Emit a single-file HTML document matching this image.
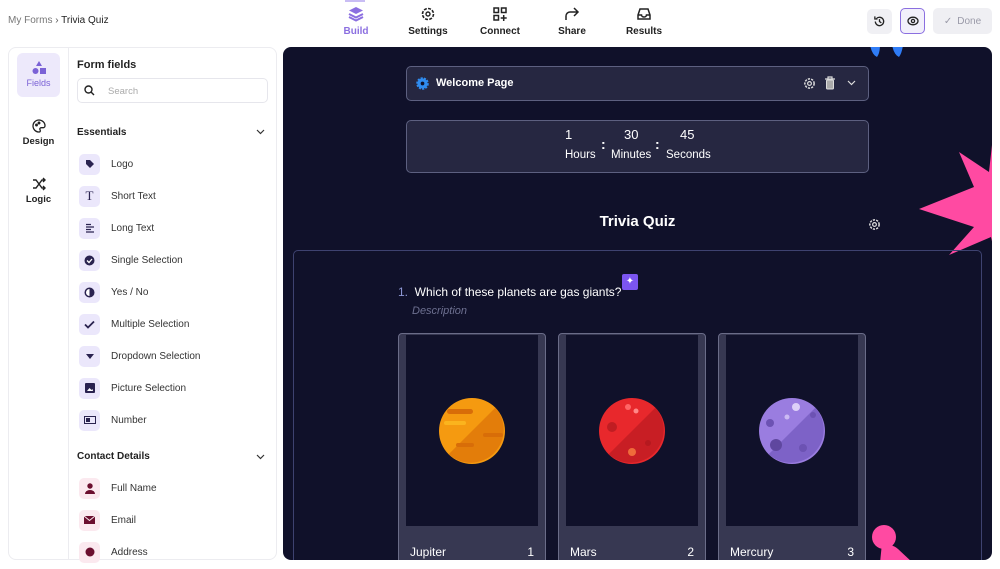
<!DOCTYPE html>
<html><head><meta charset="utf-8"><style>
*{box-sizing:border-box;margin:0;padding:0}
body{width:1000px;height:569px;overflow:hidden;background:#fff;font-family:"Liberation Sans",sans-serif;position:relative;color:#1f1f2e}
.abs{position:absolute}
.nav{position:absolute;top:6px;text-align:center;font-size:10px;font-weight:bold;color:#222}
.nav svg{display:block;margin:0 auto 4px}
.item{position:absolute;left:79px;height:22px;display:flex;align-items:center;font-size:10px;color:#333}
.ic{width:21px;height:21px;border-radius:5px;background:#ebe7fb;margin-right:11px;display:flex;align-items:center;justify-content:center}
.ic.p{background:#fbe9ef}
.sec{position:absolute;left:77px;font-size:10px;font-weight:bold;color:#222}
.chev{position:absolute;left:256px}
.card{position:absolute;top:286px;width:148px;height:240px;border:1px solid #6a6c88;border-radius:4px;background:#373852}
.card .img{position:absolute;left:7px;top:1px;width:132px;height:191px;background:#10112a}
.card .img svg{position:absolute;left:32px;top:62px;width:68px;height:68px;overflow:visible}
.card .l{position:absolute;left:11px;top:211px;color:#fff;font-size:12px}
.card .n{position:absolute;right:11px;top:211px;color:#fff;font-size:12px}
</style></head><body>
<div class="abs" style="left:8px;top:15px;font-size:10px;color:#777">My Forms <span style="color:#555">›</span> <span style="color:#222">Trivia Quiz</span></div>

<div class="nav" style="left:336px;width:40px;color:#8b6fe0">
<svg width="16" height="16" viewBox="0 0 16 16"><path d="M8 1 15 4.5 8 8 1 4.5Z" fill="#8b6fe0"/><path d="M1 8 8 11.5 15 8M1 11 8 14.5 15 11" fill="none" stroke="#8b6fe0" stroke-width="2"/></svg>Build</div>
<div class="abs" style="left:345px;top:0;width:20px;height:2px;background:#c9bdf4"></div>
<div class="nav" style="left:405px;width:46px"><svg width="16" height="16" viewBox="0 0 16 16"><circle cx="8" cy="8" r="5.5" fill="none" stroke="#222" stroke-width="1.6" stroke-dasharray="3 1.3"/><circle cx="8" cy="8" r="2" fill="none" stroke="#222" stroke-width="1.4"/></svg>Settings</div>
<div class="nav" style="left:478px;width:44px"><svg width="16" height="16" viewBox="0 0 16 16" fill="none" stroke="#222" stroke-width="1.5"><rect x="2" y="2" width="4.5" height="4.5"/><rect x="9.5" y="2" width="4.5" height="4.5"/><rect x="2" y="9.5" width="4.5" height="4.5"/><path d="M11.7 9v6M8.7 12h6"/></svg>Connect</div>
<div class="nav" style="left:552px;width:40px"><svg width="16" height="16" viewBox="0 0 16 16" fill="none" stroke="#222" stroke-width="1.5"><path d="M2 14V10a4 4 0 0 1 4-4h8M10 2l4 4-4 4"/></svg>Share</div>
<div class="nav" style="left:622px;width:44px"><svg width="16" height="16" viewBox="0 0 16 16" fill="none" stroke="#222" stroke-width="1.5"><path d="M2 9 4 3h8l2 6v4H2Z M2 9h3.5a2.5 2 0 0 0 5 0H14"/></svg>Results</div>

<div class="abs" style="left:867px;top:9px;width:25px;height:25px;border-radius:5px;background:#f0f0f4;display:flex;align-items:center;justify-content:center"><svg width="13" height="13" viewBox="0 0 14 14" fill="none" stroke="#222" stroke-width="1.4"><path d="M2.5 7a4.5 4.5 0 1 0 1.3-3.2M2 1.5v2.8h2.8M7 4.5V7l2 1.5"/></svg></div>
<div class="abs" style="left:900px;top:8px;width:25px;height:26px;border-radius:5px;background:#f2f0fb;border:1.5px solid #8b6fe0;display:flex;align-items:center;justify-content:center"><svg width="12" height="12" viewBox="0 0 12 12" fill="none" stroke="#222" stroke-width="1.3"><ellipse cx="6" cy="6" rx="5" ry="3.8"/><circle cx="6" cy="6" r="1.6"/></svg></div>
<div class="abs" style="left:933px;top:8px;width:59px;height:26px;border-radius:5px;background:#efeff3;font-size:10px;color:#9a9aa8;display:flex;align-items:center;justify-content:center;gap:5px"><span>✓</span>Done</div>

<!-- left panel -->
<div class="abs" style="left:8px;top:47px;width:269px;height:513px;border:1px solid #ececf0;border-radius:8px"></div>
<div class="abs" style="left:68px;top:48px;width:1px;height:512px;background:#ececf0"></div>
<div class="abs" style="left:17px;top:53px;width:43px;height:44px;border-radius:6px;background:#ede9fb;text-align:center;font-size:9px;color:#7b62d6;padding-top:8px"><svg width="14" height="14" viewBox="0 0 14 14" style="display:block;margin:0 auto 3px"><path d="M7 0 10 5H4Z" fill="#7b62d6"/><circle cx="3.5" cy="10" r="3" fill="#7b62d6"/><rect x="8" y="7" width="6" height="6" fill="#7b62d6"/></svg>Fields</div>
<div class="abs" style="left:17px;top:119px;width:43px;text-align:center;font-size:9.5px;font-weight:bold;color:#222"><svg width="14" height="14" viewBox="0 0 14 14" fill="none" stroke="#222" stroke-width="1.3" style="display:block;margin:0 auto 3px"><path d="M7 1a6 6 0 0 0 0 12c1.5 0 1.5-1.5 1-2.3-.6-1 .2-2 1.3-2H11a2 2 0 0 0 2-2C13 3.5 10 1 7 1Z"/><circle cx="4.5" cy="6" r=".8" fill="#222"/><circle cx="7" cy="4" r=".8" fill="#222"/></svg>Design</div>
<div class="abs" style="left:17px;top:177px;width:43px;text-align:center;font-size:9.5px;font-weight:bold;color:#222"><svg width="14" height="14" viewBox="0 0 14 14" fill="none" stroke="#222" stroke-width="1.4" style="display:block;margin:0 auto 3px"><path d="M1 3h3l6 8h3M1 11h3l6-8h3M11 1l2 2-2 2M11 9l2 2-2 2"/></svg>Logic</div>

<div class="abs" style="left:77px;top:59px;font-size:11px;font-weight:bold;color:#222">Form fields</div>
<div class="abs" style="left:77px;top:78px;width:191px;height:25px;border:1px solid #e6e6ec;border-radius:5px;font-size:9.5px;color:#aaa;padding:7px 0 0 30px">Search</div>
<svg class="abs" style="left:84px;top:85px" width="11" height="11" viewBox="0 0 11 11" fill="none" stroke="#222" stroke-width="1.4"><circle cx="4.5" cy="4.5" r="3.5"/><path d="M7 7l3 3"/></svg>

<div class="sec" style="top:127px">Essentials</div>
<svg class="chev" style="top:129px" width="9" height="6" viewBox="0 0 9 6" fill="none" stroke="#333" stroke-width="1.2"><path d="M1 1l3.5 3.5L8 1"/></svg>
<div class="item" style="top:153px"><div class="ic"><svg width="10" height="10" viewBox="0 0 10 10"><path d="M1 1h4l4 4-4 4-4-4Z" fill="#2a2350"/></svg></div>Logo</div>
<div class="item" style="top:185px"><div class="ic" style="font-family:'Liberation Serif',serif;font-size:13px;color:#2a2350">T</div>Short Text</div>
<div class="item" style="top:217px"><div class="ic"><svg width="10" height="10" viewBox="0 0 10 10" stroke="#2a2350" stroke-width="1.3"><path d="M1 1.5h5M1 4h8M1 6.5h5M1 9h8"/></svg></div>Long Text</div>
<div class="item" style="top:249px"><div class="ic"><svg width="11" height="11" viewBox="0 0 11 11"><circle cx="5.5" cy="5.5" r="5" fill="#2a2350"/><path d="M3 5.5l2 2 3-3.5" stroke="#fff" stroke-width="1.3" fill="none"/></svg></div>Single Selection</div>
<div class="item" style="top:281px"><div class="ic"><svg width="11" height="11" viewBox="0 0 11 11"><circle cx="5.5" cy="5.5" r="5" fill="#2a2350"/><path d="M5.5 5.5V2a3.5 3.5 0 0 0 0 7Z" fill="#fff"/></svg></div>Yes / No</div>
<div class="item" style="top:313px"><div class="ic"><svg width="11" height="9" viewBox="0 0 11 9"><path d="M1 4.5l3 3 6-6" stroke="#2a2350" stroke-width="1.8" fill="none"/></svg></div>Multiple Selection</div>
<div class="item" style="top:345px"><div class="ic"><svg width="8" height="5" viewBox="0 0 8 5"><path d="M0 0h8L4 5Z" fill="#2a2350"/></svg></div>Dropdown Selection</div>
<div class="item" style="top:377px"><div class="ic"><svg width="10" height="10" viewBox="0 0 10 10"><rect width="10" height="10" rx="1" fill="#2a2350"/><path d="M2 8l2.5-3 2 2 1-1L8 8Z" fill="#fff"/></svg></div>Picture Selection</div>
<div class="item" style="top:409px"><div class="ic"><svg width="12" height="8" viewBox="0 0 12 8"><rect x=".5" y=".5" width="11" height="7" fill="none" stroke="#2a2350"/><rect x="2" y="2" width="4" height="4" fill="#2a2350"/></svg></div>Number</div>

<div class="sec" style="top:451px">Contact Details</div>
<svg class="chev" style="top:454px" width="9" height="6" viewBox="0 0 9 6" fill="none" stroke="#333" stroke-width="1.2"><path d="M1 1l3.5 3.5L8 1"/></svg>
<div class="item" style="top:477px"><div class="ic p"><svg width="10" height="11" viewBox="0 0 10 11" fill="#6b0f2f"><circle cx="5" cy="3" r="2.7"/><path d="M0 11a5 4 0 0 1 10 0Z"/></svg></div>Full Name</div>
<div class="item" style="top:509px"><div class="ic p"><svg width="11" height="8" viewBox="0 0 11 8"><rect width="11" height="8" fill="#6b0f2f"/><path d="M0 0l5.5 4.5L11 0" stroke="#fbe9ef" fill="none"/></svg></div>Email</div>
<div class="item" style="top:541px"><div class="ic p"><svg width="10" height="10"><circle cx="5" cy="5" r="4.5" fill="#6b0f2f"/></svg></div>Address</div>

<!-- canvas -->
<div class="abs" style="left:283px;top:47px;width:709px;height:513px;background:#10112a;border-radius:8px;overflow:hidden">
 <svg class="abs" style="left:585px;top:-2px" width="40" height="14" viewBox="0 0 40 14"><path d="M2 0q2 10 7 12 3-4 3-12ZM24 0q2 10 7 12 3-4 4-12Z" fill="#2f7cf6"/></svg>
 <svg class="abs" style="left:636px;top:80px" width="80" height="145" viewBox="0 0 80 145"><path d="M75 0 L70 45 L40 25 L55 60 L0 82 L55 100 L30 128 L72 110 L80 145 Z" fill="#ff4aa2"/></svg>

 <div class="abs" style="left:123px;top:19px;width:463px;height:35px;border:1px solid #5d6080;border-radius:5px;background:#262741"></div>
 <svg class="abs" style="left:133px;top:30px" width="13" height="13" viewBox="0 0 14 14"><circle cx="7" cy="7" r="5.5" fill="#2f8cf0" stroke="#2f8cf0" stroke-width="2.5" stroke-dasharray="2.2 1.2"/><circle cx="7" cy="7" r="2" fill="#10112a"/></svg>
 <div class="abs" style="left:153px;top:30px;color:#fff;font-size:11px;font-weight:bold">Welcome Page</div>
 <svg class="abs" style="left:520px;top:30px" width="13" height="13" viewBox="0 0 14 14"><circle cx="7" cy="7" r="5" fill="none" stroke="#ddd" stroke-width="1.6" stroke-dasharray="2.4 1.2"/><circle cx="7" cy="7" r="2" fill="none" stroke="#ddd" stroke-width="1.3"/></svg>
 <svg class="abs" style="left:541px;top:29px" width="12" height="14" viewBox="0 0 12 14"><path d="M1 3h10M4 3V1h4v2" stroke="#ddd" fill="none" stroke-width="1.2"/><rect x="2.5" y="4" width="7" height="9" rx="1" fill="#aaa" stroke="#ddd"/></svg>
 <svg class="abs" style="left:564px;top:33px" width="9" height="6" viewBox="0 0 9 6" fill="none" stroke="#ddd" stroke-width="1.2"><path d="M1 1l3.5 3.5L8 1"/></svg>

 <div class="abs" style="left:123px;top:73px;width:463px;height:53px;border:1px solid #5d6080;border-radius:5px;background:#262741"></div>
 <div class="abs" style="left:282px;top:80px;color:#fff;font-size:13px">1</div>
 <div class="abs" style="left:282px;top:102px;color:#fff;font-size:11.5px">Hours</div>
 <div class="abs" style="left:318px;top:89px;color:#fff;font-size:14px;font-weight:bold">:</div>
 <div class="abs" style="left:341px;top:80px;color:#fff;font-size:13px">30</div>
 <div class="abs" style="left:328px;top:102px;color:#fff;font-size:11.5px">Minutes</div>
 <div class="abs" style="left:372px;top:89px;color:#fff;font-size:14px;font-weight:bold">:</div>
 <div class="abs" style="left:397px;top:80px;color:#fff;font-size:13px">45</div>
 <div class="abs" style="left:383px;top:102px;color:#fff;font-size:11.5px">Seconds</div>

 <div class="abs" style="left:0;width:709px;top:166px;text-align:center;color:#fff;font-size:15px;font-weight:bold">Trivia Quiz</div>
 <svg class="abs" style="left:585px;top:171px" width="13" height="13" viewBox="0 0 14 14"><circle cx="7" cy="7" r="5" fill="none" stroke="#ddd" stroke-width="1.6" stroke-dasharray="2.4 1.2"/><circle cx="7" cy="7" r="2" fill="none" stroke="#ddd" stroke-width="1.3"/></svg>

 <div class="abs" style="left:10px;top:203px;width:689px;height:330px;border:1px solid #3e4270;border-radius:5px"></div>
 <div class="abs" style="left:115px;top:238px;color:#fff;font-size:12px"><span style="color:#8e97d4">1.</span>&nbsp; Which of these planets are gas giants?</div>
 <div class="abs" style="left:339px;top:227px;width:16px;height:16px;background:#7b55f0;border-radius:2px;color:#fff;font-size:10px;text-align:center;line-height:16px">✦</div>
 <div class="abs" style="left:129px;top:258px;color:#6d7090;font-size:11px;font-style:italic">Description</div>

 <div class="card" style="left:115px"><div class="img"><svg viewBox="0 0 68 68"><circle cx="34" cy="34" r="33" fill="#f59a10"/><path d="M57.3 10.7A33 33 0 0 1 10.7 57.3Z" fill="#e37d0a"/><rect x="9" y="12" width="26" height="5" rx="2.5" fill="#d86d08"/><rect x="6" y="24" width="22" height="4" rx="2" fill="#fbb41d"/><rect x="45" y="36" width="20" height="4" rx="2" fill="#d86d08"/><rect x="18" y="46" width="18" height="4" rx="2" fill="#d86d08"/></svg></div><div class="l">Jupiter</div><div class="n">1</div></div>
 <div class="card" style="left:275px"><div class="img"><svg viewBox="0 0 68 68"><circle cx="34" cy="34" r="33" fill="#e8282c"/><path d="M57.3 10.7A33 33 0 0 1 10.7 57.3Z" fill="#c81e24"/><circle cx="30" cy="10" r="3" fill="#f66"/><circle cx="38" cy="14" r="2.5" fill="#f88"/><circle cx="14" cy="30" r="5" fill="#c01d22"/><circle cx="34" cy="55" r="4" fill="#ef6b3a"/><circle cx="50" cy="46" r="3" fill="#b5191f"/></svg></div><div class="l">Mars</div><div class="n">2</div></div>
 <div class="card" style="left:435px"><div class="img"><svg viewBox="0 0 68 68"><circle cx="34" cy="34" r="33" fill="#9a7de0"/><path d="M57.3 10.7A33 33 0 0 1 10.7 57.3Z" fill="#7d62c7"/><circle cx="38" cy="10" r="4" fill="#ddd0f8"/><circle cx="29" cy="20" r="2.5" fill="#ccbaf3"/><circle cx="12" cy="26" r="4" fill="#6c52b3"/><circle cx="18" cy="48" r="6" fill="#5f479f"/><circle cx="45" cy="51" r="4" fill="#6c52b3"/><circle cx="55" cy="18" r="3" fill="#6c52b3"/></svg></div><div class="l">Mercury</div><div class="n">3</div></div>

 <svg class="abs" style="left:585px;top:476px" width="50" height="40" viewBox="0 0 50 40"><circle cx="16" cy="14" r="12" fill="#ff4aa2"/><path d="M14 20 Q26 22 30 26 L45 40 H12 Z" fill="#ff4aa2"/></svg>
</div>
</body></html>
